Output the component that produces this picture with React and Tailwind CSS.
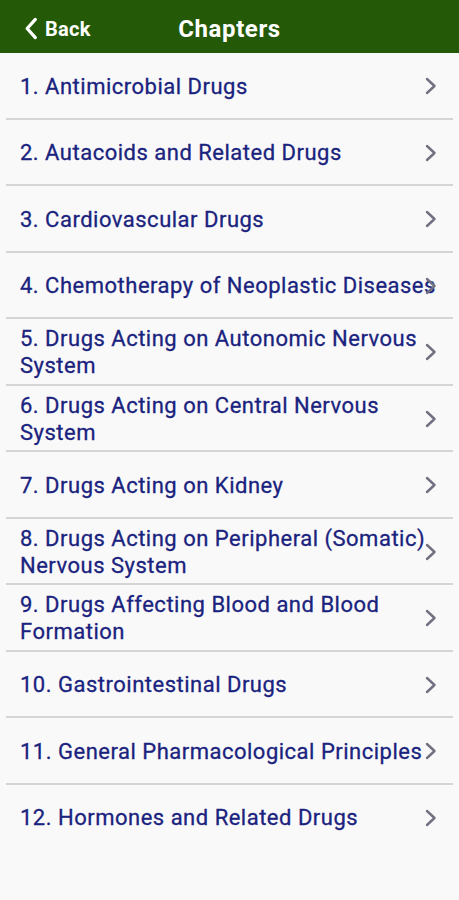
import React from "react";

const chapters = [
  ["1. Antimicrobial Drugs"],
  ["2. Autacoids and Related Drugs"],
  ["3. Cardiovascular Drugs"],
  ["4. Chemotherapy of Neoplastic Diseases"],
  ["5. Drugs Acting on Autonomic Nervous", "System"],
  ["6. Drugs Acting on Central Nervous", "System"],
  ["7. Drugs Acting on Kidney"],
  ["8. Drugs Acting on Peripheral (Somatic)", "Nervous System"],
  ["9. Drugs Affecting Blood and Blood", "Formation"],
  ["10. Gastrointestinal Drugs"],
  ["11. General Pharmacological Principles"],
  ["12. Hormones and Related Drugs"],
];

function Chevron({ className }) {
  return (
    <svg viewBox="0 0 12 18" className={className} fill="none">
      <path d="M2 2l7.5 7-7.5 7" stroke="currentColor" strokeWidth="2.4" strokeLinecap="round" strokeLinejoin="round" />
    </svg>
  );
}

export default function App() {
  return (
    <div className="w-[459px] h-[900px] bg-[#f9f9f9] overflow-hidden" style={{ fontFamily: "Roboto, 'Noto Sans', sans-serif" }}>
      {/* Header */}
      <div className="h-[53px] bg-[#245a07] flex items-center relative pt-[4px]">
        <div className="flex items-center pl-[24px] text-white">
          <svg viewBox="0 0 14 24" className="w-[14px] h-[23px]" fill="none">
            <path d="M11.5 2.5L3 12l8.5 9.5" stroke="currentColor" strokeWidth="3.4" strokeLinecap="round" strokeLinejoin="round" />
          </svg>
          <span className="ml-[7px] text-[20px] font-bold tracking-[0.3px]">Back</span>
        </div>
        <div className="absolute left-0 right-0 text-center text-white text-[24px] font-bold tracking-[0.6px] pointer-events-none">
          Chapters
        </div>
      </div>

      {/* List */}
      <div>
        {chapters.map((lines, i) => (
          <div key={i} className="relative h-[66.5px] flex flex-col justify-center">
            <div className="pl-[20px] text-[22px] leading-[27px] tracking-[0.5px] text-[#1a237e] whitespace-nowrap [-webkit-text-stroke:0.3px_#1a237e]">
              {lines.map((l, j) => (
                <div key={j}>{l}</div>
              ))}
            </div>
            <Chevron className="absolute right-[22px] top-1/2 -translate-y-1/2 w-[12px] h-[18px] text-[#707080]" />
            {i < chapters.length - 1 && (
              <div className="absolute bottom-0 left-[6px] right-[6px] h-[2px] bg-[#d5d5d5]" />
            )}
          </div>
        ))}
      </div>
    </div>
  );
}
